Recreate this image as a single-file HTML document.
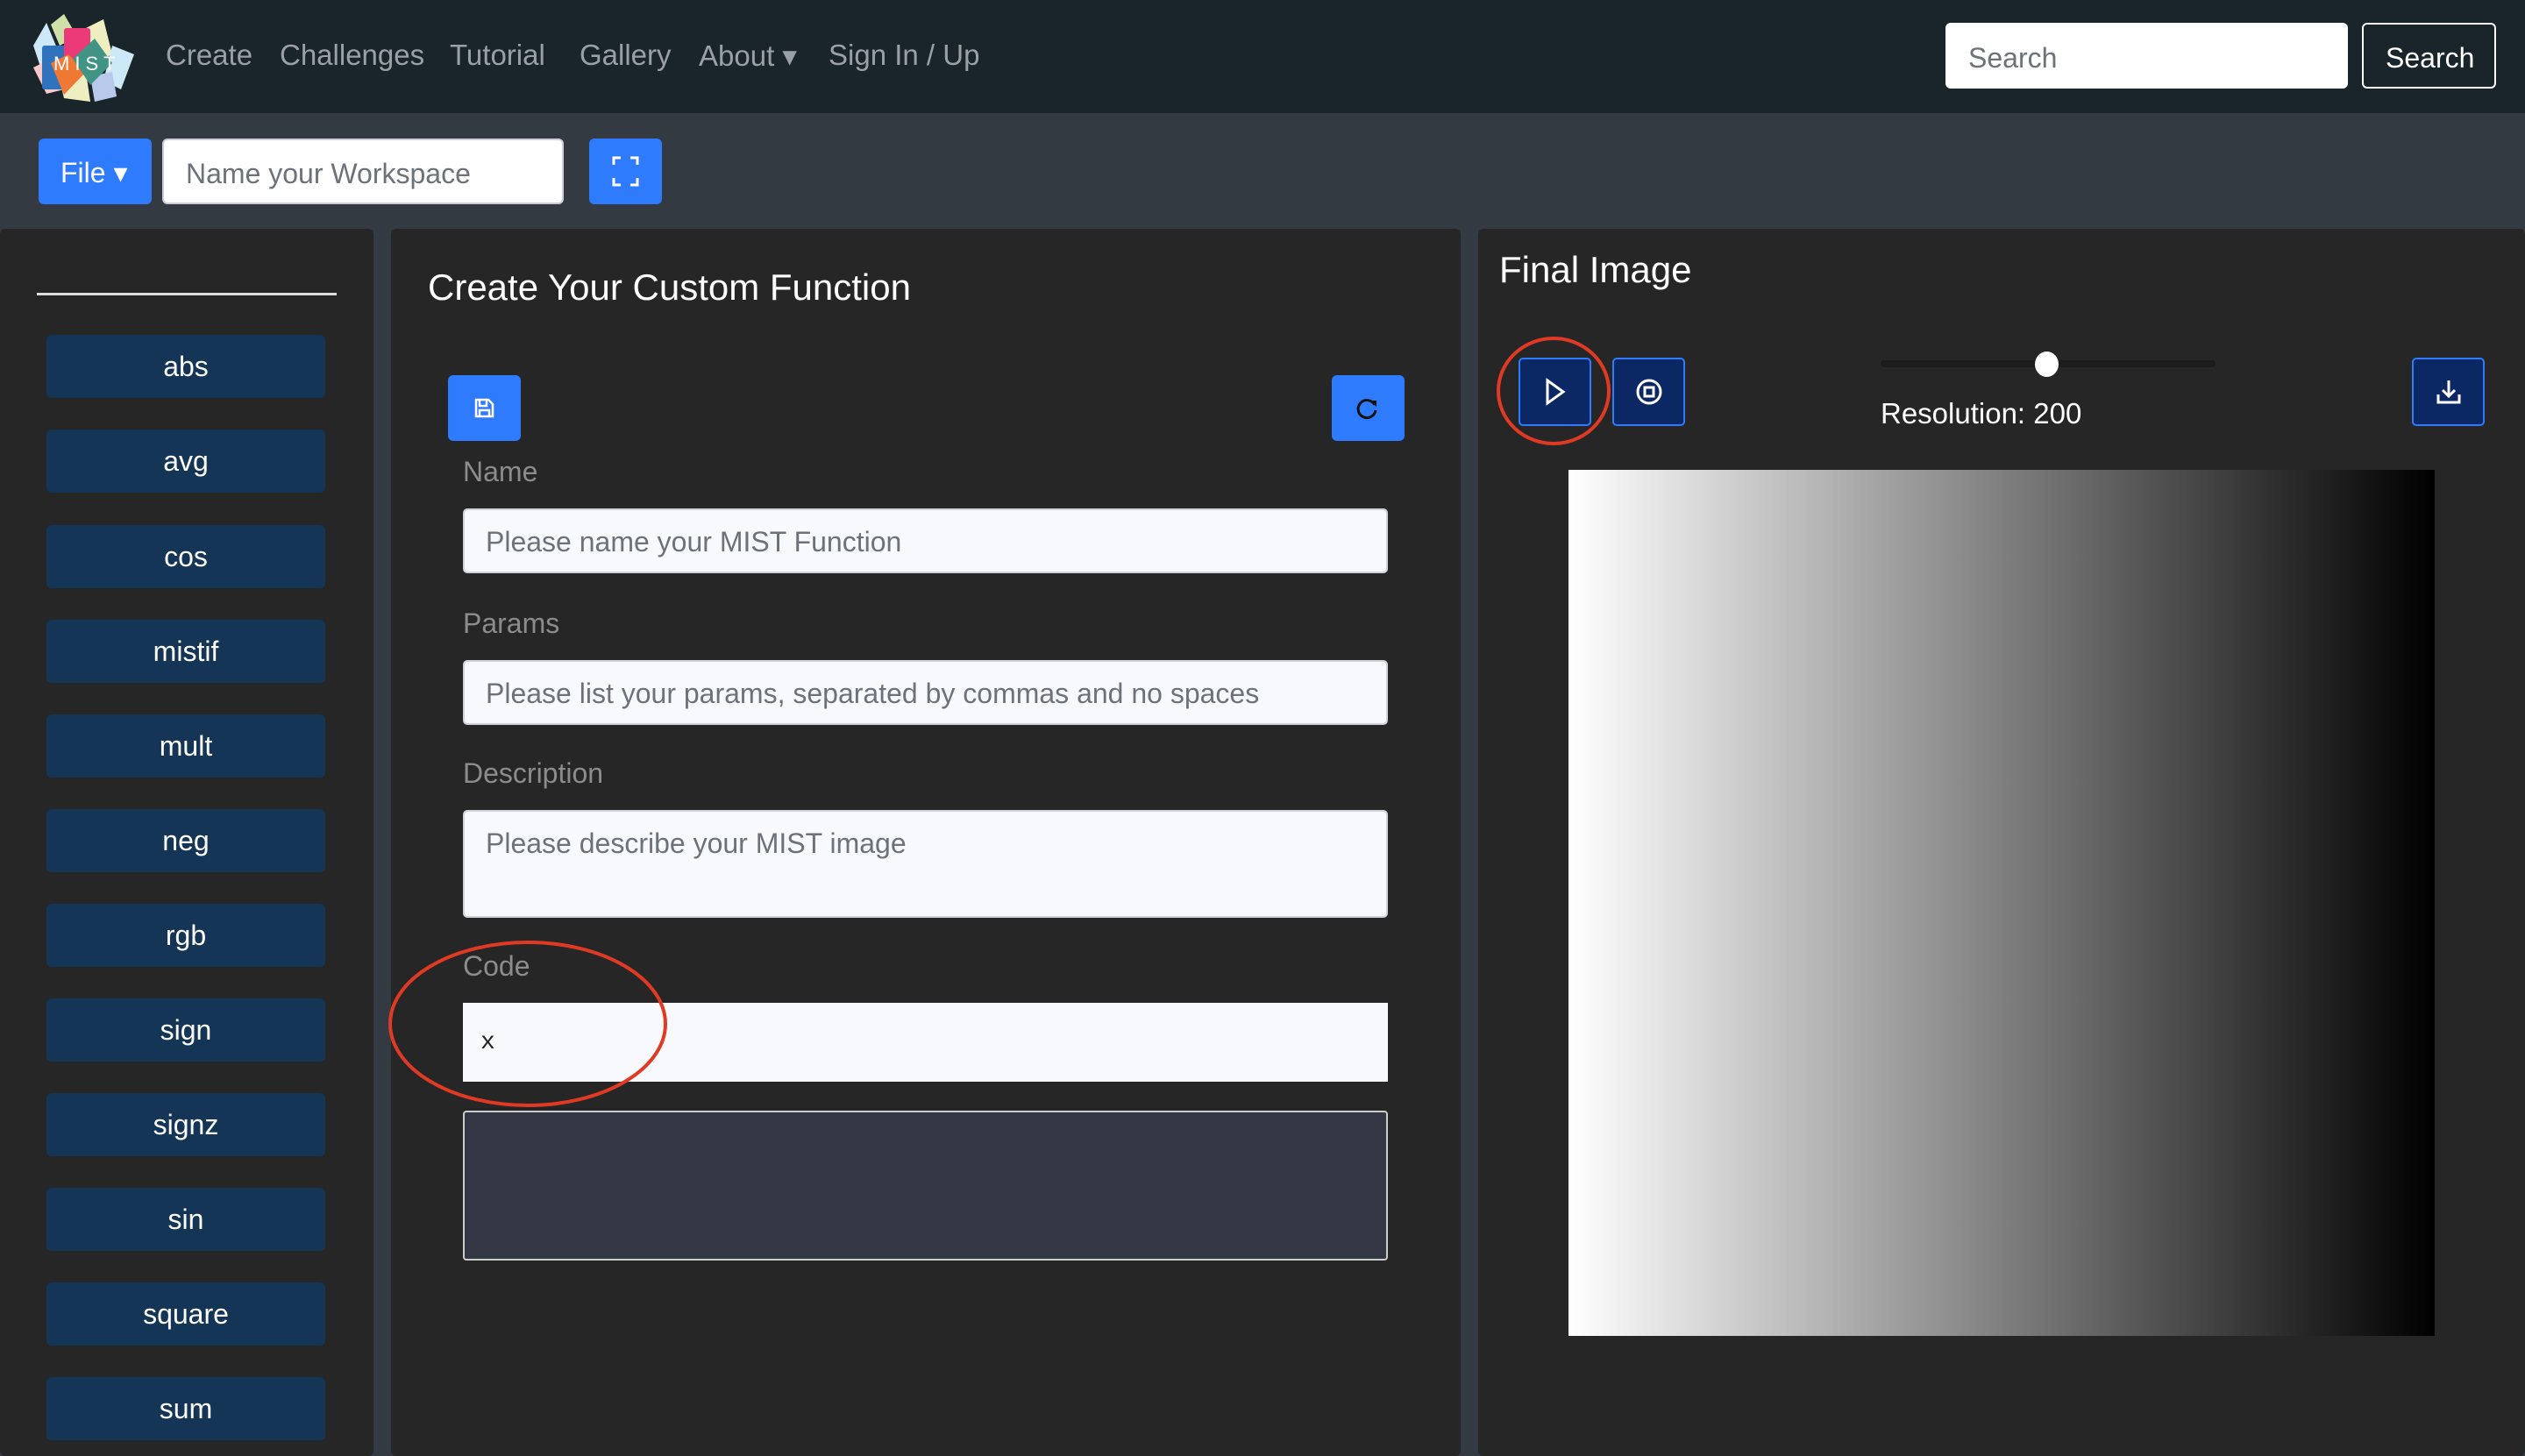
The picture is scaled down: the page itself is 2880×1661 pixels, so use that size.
<!DOCTYPE html>
<html><head><meta charset="utf-8"><style>
*{box-sizing:border-box;margin:0;padding:0}
body{width:2880px;height:1650px;overflow:hidden;background:#343a42;font-family:"Liberation Sans",sans-serif;position:relative}
.a{position:absolute}
.nav{left:0;top:0;width:2880px;height:129px;background:#1a242b}
.nl{top:44px;font-size:33px;color:#9aa0a6}
.blue{background:#2f7bfd;border-radius:6px}
.panel{background:#262626;top:261px;height:1400px;border-radius:6px}
.fb{left:53px;width:318px;height:72px;background:#143556;border-radius:6px;color:#fff;font-size:32px;text-align:center;line-height:72px}
.lbl{left:528px;font-size:32px;color:#8c8c8c}
.inp{left:528px;width:1055px;background:#f8f9fd;border:2px solid #d0d4da;border-radius:5px;font-size:32px;color:#6c727a;padding-left:24px}
.nb{background:#0b2865;border:2px solid #2f7bfd;border-radius:5px;width:83px;height:78px;display:flex;align-items:center;justify-content:center}
</style></head><body>
<div class="a nav"></div>
<svg class="a" style="left:28px;top:12px" width="150" height="106" viewBox="0 0 150 106">
<polygon points="30,16 45,4 60,30 40,40" fill="#cfe0a8"/>
<polygon points="10,40 25,14 40,50 20,70" fill="#cde9f8"/>
<polygon points="70,20 90,10 100,50 80,60" fill="#eeeec0"/>
<polygon points="100,40 125,50 110,90 90,80" fill="#cde9f8"/>
<polygon points="10,65 30,55 45,90 25,95" fill="#f7c9c9"/>
<polygon points="40,80 70,70 75,104 45,100" fill="#eeeec0"/>
<polygon points="75,75 100,70 105,98 80,104" fill="#b9c9ec"/>
<rect x="20" y="40" width="32" height="50" rx="3" fill="#2f73bd"/>
<rect x="45" y="20" width="30" height="45" rx="3" fill="#ec3a78"/>
<polygon points="30,60 50,50 70,70 45,96" fill="#ef7834"/>
<polygon points="55,55 80,32 100,60 75,85" fill="#3f9483"/>
<text x="33" y="68" font-size="22" fill="#fff" font-family="Liberation Sans" letter-spacing="6">MIST</text>
</svg>
<div class="a nl" style="left:189px">Create</div>
<div class="a nl" style="left:319px">Challenges</div>
<div class="a nl" style="left:513px">Tutorial</div>
<div class="a nl" style="left:661px">Gallery</div>
<div class="a nl" style="left:797px">About ▾</div>
<div class="a nl" style="left:945px">Sign In / Up</div>
<div class="a" style="left:2219px;top:26px;width:459px;height:75px;background:#fff;border-radius:6px;font-size:32px;color:#6c727a;padding:22px 0 0 26px">Search</div>
<div class="a" style="left:2694px;top:26px;width:153px;height:75px;border:2px solid #fff;border-radius:6px;font-size:32px;color:#fff;padding:20px 0 0 25px">Search</div>

<div class="a blue" style="left:44px;top:158px;width:129px;height:75px;color:#fff;font-size:32px;padding:20px 0 0 25px">File ▾</div>
<div class="a" style="left:185px;top:158px;width:458px;height:75px;background:#fff;border:2px solid #ccd;border-radius:6px;font-size:32px;color:#6c727a;padding:20px 0 0 25px">Name your Workspace</div>
<div class="a blue" style="left:672px;top:158px;width:83px;height:75px"><svg width="83" height="75"><path d="M28 30v-8h8M47 22h8v8M55 45v8h-8M36 53h-8v-8" stroke="#fff" stroke-width="3" fill="none"/></svg></div>

<div class="a panel" style="left:0;width:426px"></div>
<div class="a" style="left:42px;top:334px;width:342px;height:3px;background:#ddd"></div>
<div class="a fb" style="top:382px">abs</div>
<div class="a fb" style="top:490px">avg</div>
<div class="a fb" style="top:599px">cos</div>
<div class="a fb" style="top:707px">mistif</div>
<div class="a fb" style="top:815px">mult</div>
<div class="a fb" style="top:923px">neg</div>
<div class="a fb" style="top:1031px">rgb</div>
<div class="a fb" style="top:1139px">sign</div>
<div class="a fb" style="top:1247px">signz</div>
<div class="a fb" style="top:1355px">sin</div>
<div class="a fb" style="top:1463px">square</div>
<div class="a fb" style="top:1571px">sum</div>

<div class="a panel" style="left:446px;width:1220px"></div>
<div class="a" style="left:488px;top:304px;font-size:42px;color:#fff">Create Your Custom Function</div>
<div class="a blue" style="left:511px;top:428px;width:83px;height:75px"><svg width="83" height="75"><path d="M32 28h14l5 5v14h-19z M36 28v7h8v-7 M36 47v-7h11v7" stroke="#fff" stroke-width="2.5" fill="none"/></svg></div>
<div class="a blue" style="left:1519px;top:428px;width:83px;height:75px"><svg width="83" height="75"><path d="M49 34a10 10 0 1 0 1 6" stroke="#111" stroke-width="3" fill="none"/><path d="M44 29l7 0 0 7z" fill="#111"/></svg></div>
<div class="a lbl" style="top:520px">Name</div>
<div class="a inp" style="top:580px;height:74px;padding-top:18px">Please name your MIST Function</div>
<div class="a lbl" style="top:693px">Params</div>
<div class="a inp" style="top:753px;height:74px;padding-top:18px">Please list your params, separated by commas and no spaces</div>
<div class="a lbl" style="top:864px">Description</div>
<div class="a inp" style="top:924px;height:123px;padding-top:18px">Please describe your MIST image</div>
<div class="a lbl" style="top:1084px">Code</div>
<div class="a" style="left:528px;top:1144px;width:1055px;height:90px;background:#f8f9fd;font-family:'Liberation Mono',monospace;font-size:28px;color:#222;padding:30px 0 0 20px">x</div>
<div class="a" style="left:528px;top:1267px;width:1055px;height:171px;background:#343844;border:2px solid #ccc;border-radius:4px"></div>
<svg class="a" style="left:440px;top:1070px" width="330" height="200"><ellipse cx="162" cy="98" rx="157" ry="93" stroke="#e03a24" stroke-width="4" fill="none"/></svg>

<div class="a panel" style="left:1686px;width:1194px"></div>
<div class="a" style="left:1710px;top:284px;font-size:42px;color:#fff">Final Image</div>
<div class="a nb" style="left:1732px;top:408px"><svg width="30" height="34"><path d="M6 4l18 13-18 13z" stroke="#fff" stroke-width="3" fill="none"/></svg></div>
<div class="a nb" style="left:1839px;top:408px"><svg width="34" height="34"><circle cx="17" cy="17" r="13" stroke="#fff" stroke-width="3" fill="none"/><rect x="12" y="12" width="10" height="10" stroke="#fff" stroke-width="3" fill="none"/></svg></div>
<svg class="a" style="left:1700px;top:378px" width="150" height="140"><ellipse cx="72" cy="68" rx="63" ry="60" stroke="#e03a24" stroke-width="4" fill="none"/></svg>
<div class="a" style="left:2145px;top:411px;width:382px;height:8px;background:#1c1c1c;border-radius:4px"></div>
<div class="a" style="left:2321px;top:401px;width:27px;height:29px;background:#fff;border-radius:50%"></div>
<div class="a" style="left:2145px;top:453px;font-size:33px;color:#fff">Resolution: 200</div>
<div class="a nb" style="left:2751px;top:408px"><svg width="34" height="34"><path d="M17 4v18M10 15l7 7 7-7M5 20v9h24v-9" stroke="#fff" stroke-width="3" fill="none"/></svg></div>
<div class="a" style="left:1789px;top:536px;width:988px;height:988px;background:linear-gradient(to right,#fff,#000)"></div>
</body></html>
